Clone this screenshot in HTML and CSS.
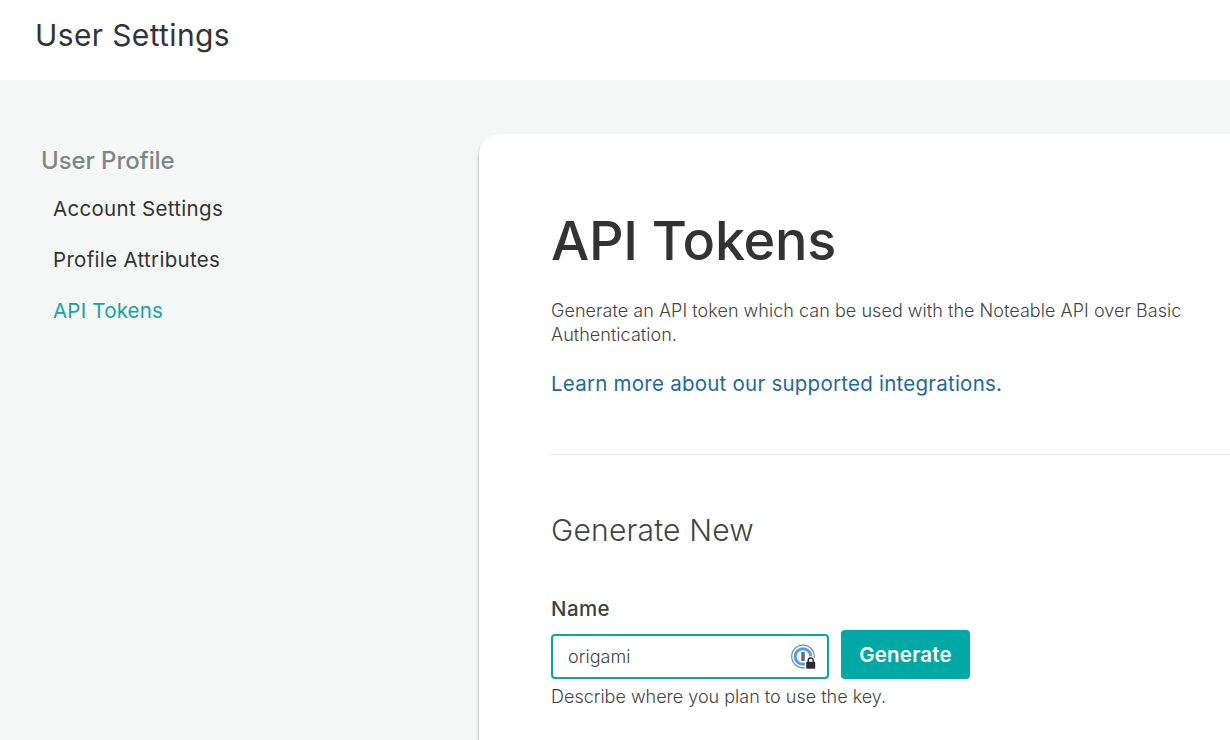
FILE: index.html
```html
<!DOCTYPE html>
<html lang="en">
<head>
<meta charset="utf-8">
<title>User Settings</title>
<link rel="stylesheet" href="styles.css">
</head>
<body>
<header class="topbar"><span class="topbar-title">User Settings</span></header>
<div class="layout">
  <nav class="sidebar">
    <h2 class="side-heading">User Profile</h2>
    <a class="side-link">Account Settings</a>
    <a class="side-link">Profile Attributes</a>
    <a class="side-link active">API Tokens</a>
  </nav>
  <main class="card">
    <h1 class="title">API Tokens</h1>
    <p class="intro">Generate an API token which can be used with the Noteable API over Basic<br>Authentication.</p>
    <a class="learn">Learn more about our supported integrations.</a>
    <hr class="rule">
    <h2 class="subtitle">Generate New</h2>
    <label class="label">Name</label>
    <div class="form-row">
      <div class="field"><span class="value">origami</span>
        <svg class="pw-icon" width="26" height="26" viewBox="0 0 26 26">
          <circle cx="13" cy="12.500" r="11.300" fill="#fff" stroke="#8a8a8a" stroke-width="1.200"/>
          <circle cx="13" cy="12.500" r="7.800" fill="none" stroke="#479ffa" stroke-width="3"/>
          <rect x="11.300" y="8" width="3.400" height="9" rx=".3" fill="#666"/>
          <path d="M14.900 26V17.500L16 16.500a4.600 4.600 0 0 1 8.500-2H26V26z" fill="#fff"/>
          <rect x="16.200" y="17.700" width="9" height="7" rx="1" fill="#2c2c2c"/>
          <path d="M18.200 18.200v-1.700a2.500 2.500 0 0 1 5 0v1.700" fill="none" stroke="#2c2c2c" stroke-width="1.400"/>
        </svg>
      </div>
      <button class="button">Generate</button>
    </div>
    <p class="hint">Describe where you plan to use the key.</p>
  </main>
</div>
</body>
</html>
```
FILE: styles.css
```css
* { box-sizing: border-box; }
html, body { height: 100%; overflow: hidden; }
body { margin: 0; font-family: Inter, sans-serif; color: #333; background: #f4f7f6; white-space: nowrap; }
h1, h2, p { margin: 0; }
.topbar { height: 80px; padding: 16px 35px; background: #fff; font-size: 30px; line-height: 38px; }
.topbar-title { letter-spacing: 0.36px; }
.layout { display: flex; height: 660px; overflow: hidden; }
.sidebar { flex: none; width: 479px; padding: 65px 41px; }
.side-heading { font-size: 24px; line-height: 32px; font-weight: 500; color: #808786; margin-bottom: 6px; letter-spacing: -0.08px; }
.side-link { display: block; padding-left: 12px; font-size: 20.500px; line-height: 51px; letter-spacing: 0.31px; }
.active { color: #12a5a2; letter-spacing: 0.2px; }
.card { width: 900px; flex: none; height: 606px; margin-top: 54px; padding: 72px 72px 0; background: #fff; border-radius: 20px 0 0 0; box-shadow: 0 3px 3px rgba(0,0,0,.4); }
.title { font-size: 54px; line-height: 70px; font-weight: 500; letter-spacing: -0.3px; }
.intro { margin-top: 23px; font-size: 18px; line-height: 24px; font-weight: 300; letter-spacing: 0.04px; color: #444; }
.learn { display: block; margin-top: 24px; font-size: 20.500px; line-height: 26px; color: #1b69a3; letter-spacing: 0.24px; }
.rule { margin: 57px 0 0; border: 0; border-top: 1px solid #e8eaea; }
.subtitle { margin-top: 56px; font-size: 30px; line-height: 39px; font-weight: 300; letter-spacing: 0.2px; color: #414545; }
.label { display: block; margin-top: 46px; font-size: 20.500px; line-height: 26px; font-weight: 500; letter-spacing: 0.4px; color: #3c4242; }
.form-row { display: flex; margin-top: 8px; gap: 12px; align-items: flex-end; }
.field { display: flex; width: 278px; height: 45px; align-items: center; justify-content: space-between; padding: 0 11px 0 15px; border: 2px solid #04a9a6; border-radius: 4px; font-size: 18px; font-weight: 350; letter-spacing: 0.05px; color: #444; }
.button { width: 129px; height: 49px; padding: 0; border: 0; border-radius: 4px; background: #00a8a6; color: #fff; font: 600 20.500px Inter, sans-serif; letter-spacing: 0.2px; }
.hint { margin-top: 6px; font-size: 18px; line-height: 24px; font-weight: 300; color: #444; }
```
